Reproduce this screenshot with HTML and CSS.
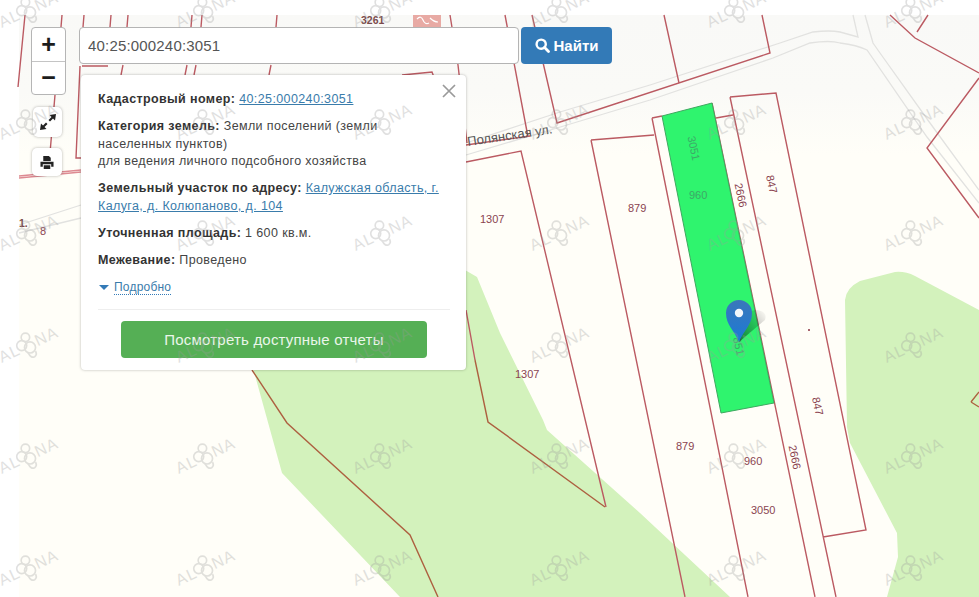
FILE: index.html
```html
<!DOCTYPE html>
<html lang="ru">
<head>
<meta charset="utf-8">
<title>Кадастровая карта</title>
<link rel="stylesheet" href="styles.css">
</head>
<body>
<main class="map">
  <svg class="map-art" width="979" height="597" viewBox="0 0 979 597" xmlns="http://www.w3.org/2000/svg">
    <defs>
      <linearGradient id="upper" x1="0" y1="0" x2="0" y2="1">
        <stop offset="0" stop-color="#f9f9f7"/>
        <stop offset="0.55" stop-color="#fafaf7"/>
        <stop offset="1" stop-color="#fffef8"/>
      </linearGradient>
      <linearGradient id="pinfill" x1="0" y1="0" x2="0" y2="1">
        <stop offset="0" stop-color="#3a78ba"/>
        <stop offset="1" stop-color="#1c79d6"/>
      </linearGradient>
      <linearGradient id="pinshadow" x1="0" y1="1" x2="1" y2="0">
        <stop offset="0" stop-color="#000" stop-opacity=".5"/>
        <stop offset="1" stop-color="#000" stop-opacity="0"/>
      </linearGradient>
    </defs>
    <rect class="paper" x="19" y="15" width="960" height="582"/>
    <rect x="19" y="15" width="960" height="140" fill="url(#upper)"/>
    <path class="wood" d="M248 350 L465 270 L477 277 L500 333 L543 420 L547 430 L640 513 L730 597 L400 597 L282 473 Z"/>
    <path class="wood" d="M845 300 Q846 288 860 281 L895 272 Q905 271 915 276 L979 310 L979 597 L887 597 L898 557 L897 533 L850 443 L847 427 Z"/>
    <path class="road" d="M466 155 L557 128 L650 100 L773 58 L810 43 Q830 40 840 43 Q857 45 867 50 L927 137 L979 203 M466 143 L560 112 L650 85 L780 43 L813 32 Q830 30 840 32 L858 37 L853 15 M865 15 L873 43 L880 53 L930 123 L979 190 M19 233 L81 218 M19 225 L81 205"/>
    <path class="parcel soft" d="M19 178 L81 172 M19 176 L81 170"/>
    <path class="parcel" d="M25 15 L18 87 M62 15 L61 27 M84 15 L83 27 M111 15 L110 27 M128 15 L127 27 M192 15 L191 27 M202 15 L201 27 M277 15 L276 27 M450 15 L458 65 L467 143 M505 15 L528 137 M532 15 L557 123 L770 53 L762 15 M664 15 L679 83 M82 66 L108 66 M123 65 L121 75 M187 65 L185 75 M196 65 L194 75 M271 65 L269 75 M402 75 L432 72 L435 80 M80 66 L76 158 L81 158 M55 95 L48 176 M466 145 L530 136 M466 162 L521 151 L606 507 M466 310 L475 360 M591 140 L654 135 M591 140 L685 597 M652 118 L662 116 M652 118 L748 597 M716 118 L733 115 M730 97 L776 93 L866 530 L823 537 M730 97 L836 597 M712 103 L815 597 M890 15 L915 38 L979 73 M928 15 L917 32 M979 78 L927 148 L979 218"/>
    <path class="parcel on-wood" d="M252 370 L287 423 L410 535 L438 597 M475 360 L488 422 L605 507 M971 402 L979 392 M971 402 L979 407"/>
    <polygon class="target" points="662,116 712,103 774,403 721,413"/>
    <rect class="stamp" x="413" y="15" width="28" height="12"/>
    <path class="stamp-line" d="M417 19 Q421 15 423 20 T429 23 M430 18 Q434 22 438 22"/>
    <circle class="dot" cx="809" cy="330" r="1"/>
    <text class="lot dark" x="361" y="24">3261</text>
    <text class="lot" x="480" y="223">1307</text>
    <text class="lot" x="628" y="212">879</text>
    <text class="lot on-green" x="689" y="199">960</text>
    <text class="lot" x="515" y="378">1307</text>
    <text class="lot" x="676" y="450">879</text>
    <text class="lot" x="744" y="465">960</text>
    <text class="lot" x="751" y="514">3050</text>
    <text class="lot on-green" x="690" y="149" transform="rotate(78 690 149)" text-anchor="middle">3051</text>
    <text class="lot" x="737" y="196" transform="rotate(78 737 196)" text-anchor="middle">2666</text>
    <text class="lot" x="768" y="185" transform="rotate(78 768 185)" text-anchor="middle">847</text>
    <text class="lot" x="791" y="458" transform="rotate(78 791 458)" text-anchor="middle">2666</text>
    <text class="lot" x="814" y="407" transform="rotate(78 814 407)" text-anchor="middle">847</text>
    <text class="lot on-green" x="735" y="347" transform="rotate(78 735 347)" text-anchor="middle">851</text>
    <text class="lot" x="40" y="235">8</text>
    <text class="lot dark" x="19" y="227">1.</text>
    <text class="street" x="468" y="146" transform="rotate(-8.5 468 146)">Полянская ул.</text>
    <path d="M739 342 L765 320 Q768 311 756 310 L744 312 Z" fill="url(#pinshadow)"/>
    <path d="M739 342 C734 330 726 325 726 313 A13 13 0 0 1 752 313 C752 325 744 330 739 342 Z" fill="url(#pinfill)"/>
    <circle cx="739" cy="313" r="4.2" fill="#f2f6fa"/>
  </svg>

  <div class="zoom-box">
    <button class="zoom-btn" type="button">+</button>
    <button class="zoom-btn" type="button">−</button>
  </div>
  <div class="tool tool-full">
    <svg width="18" height="18" viewBox="0 0 18 18" xmlns="http://www.w3.org/2000/svg"><path class="ink" d="M17 1 L10.5 2 L12.5 4 L9.5 7 L11 8.5 L14 5.5 L16 7.5 Z M1 17 L7.5 16 L5.5 14 L8.5 11 L7 9.5 L4 12.5 L2 10.5 Z"/></svg>
  </div>
  <div class="tool tool-print">
    <svg width="14" height="15" viewBox="0 0 15 15" xmlns="http://www.w3.org/2000/svg"><path class="ink" d="M3.5 0.5 H9.5 L11.5 2.5 V6 H3.5 Z M0.5 6.8 H14.5 V12 H12 V9.5 H3 V12 H0.5 Z M4 10.5 H11 V14.5 H4 Z"/></svg>
  </div>

  <form class="search">
    <input class="search-input" type="text" value="40:25:000240:3051">
    <button class="search-btn" type="button">
      <svg width="15" height="15" viewBox="0 0 15 15" xmlns="http://www.w3.org/2000/svg"><circle cx="6.2" cy="6.2" r="4.6" fill="none" stroke="#fff" stroke-width="2.4"/><path d="M9.6 9.6 L13.5 13.5" stroke="#fff" stroke-width="2.8" stroke-linecap="round"/></svg>
      Найти
    </button>
  </form>

  <section class="popup">
    <svg class="popup-close" width="14" height="14" viewBox="0 0 14 14" xmlns="http://www.w3.org/2000/svg"><path d="M1 1 L13 13 M13 1 L1 13" stroke="#9a9a9a" stroke-width="1.7"/></svg>
    <p class="row"><b>Кадастровый номер:</b> <a href="#">40:25:000240:3051</a></p>
    <p class="row"><b>Категория земель:</b> Земли поселений (земли населенных пунктов)<br>для ведения личного подсобного хозяйства</p>
    <p class="row"><b>Земельный участок по адресу:</b> <a href="#">Калужская область, г. Калуга, д. Колюпаново, д. 104</a></p>
    <p class="row"><b>Уточненная площадь:</b> 1 600 кв.м.</p>
    <p class="row"><b>Межевание:</b> Проведено</p>
    <div class="more"><i class="caret"></i><span class="more-link">Подробно</span></div>
    <hr class="rule">
    <button class="reports" type="button">Посмотреть доступные отчеты</button>
  </section>

  <svg class="defs-only" width="0" height="0" xmlns="http://www.w3.org/2000/svg">
    <symbol id="knot" viewBox="0 0 26 30">
      <g fill="none" stroke="currentColor" stroke-width="1.8">
        <circle cx="11" cy="6" r="4.6"/>
        <circle cx="7" cy="15" r="5.4"/>
        <circle cx="16" cy="17" r="6"/>
        <path d="M14 23 Q17 29 21 27 Q24 25 22 21"/>
      </g>
    </symbol>
  </svg>
  <div class="marks">
    <div class="mark">AL<svg class="knot"><use href="#knot"/></svg>NA</div><div class="mark">AL<svg class="knot"><use href="#knot"/></svg>NA</div><div class="mark">AL<svg class="knot"><use href="#knot"/></svg>NA</div><div class="mark">AL<svg class="knot"><use href="#knot"/></svg>NA</div><div class="mark">AL<svg class="knot"><use href="#knot"/></svg>NA</div><div class="mark">AL<svg class="knot"><use href="#knot"/></svg>NA</div>
    <div class="mark">AL<svg class="knot"><use href="#knot"/></svg>NA</div><div class="mark">AL<svg class="knot"><use href="#knot"/></svg>NA</div><div class="mark">AL<svg class="knot"><use href="#knot"/></svg>NA</div><div class="mark">AL<svg class="knot"><use href="#knot"/></svg>NA</div><div class="mark">AL<svg class="knot"><use href="#knot"/></svg>NA</div><div class="mark">AL<svg class="knot"><use href="#knot"/></svg>NA</div>
    <div class="mark">AL<svg class="knot"><use href="#knot"/></svg>NA</div><div class="mark">AL<svg class="knot"><use href="#knot"/></svg>NA</div><div class="mark">AL<svg class="knot"><use href="#knot"/></svg>NA</div><div class="mark">AL<svg class="knot"><use href="#knot"/></svg>NA</div><div class="mark">AL<svg class="knot"><use href="#knot"/></svg>NA</div><div class="mark">AL<svg class="knot"><use href="#knot"/></svg>NA</div>
    <div class="mark">AL<svg class="knot"><use href="#knot"/></svg>NA</div><div class="mark">AL<svg class="knot"><use href="#knot"/></svg>NA</div><div class="mark">AL<svg class="knot"><use href="#knot"/></svg>NA</div><div class="mark">AL<svg class="knot"><use href="#knot"/></svg>NA</div><div class="mark">AL<svg class="knot"><use href="#knot"/></svg>NA</div><div class="mark">AL<svg class="knot"><use href="#knot"/></svg>NA</div>
    <div class="mark">AL<svg class="knot"><use href="#knot"/></svg>NA</div><div class="mark">AL<svg class="knot"><use href="#knot"/></svg>NA</div><div class="mark">AL<svg class="knot"><use href="#knot"/></svg>NA</div><div class="mark">AL<svg class="knot"><use href="#knot"/></svg>NA</div><div class="mark">AL<svg class="knot"><use href="#knot"/></svg>NA</div><div class="mark">AL<svg class="knot"><use href="#knot"/></svg>NA</div>
    <div class="mark">AL<svg class="knot"><use href="#knot"/></svg>NA</div><div class="mark">AL<svg class="knot"><use href="#knot"/></svg>NA</div><div class="mark">AL<svg class="knot"><use href="#knot"/></svg>NA</div><div class="mark">AL<svg class="knot"><use href="#knot"/></svg>NA</div><div class="mark">AL<svg class="knot"><use href="#knot"/></svg>NA</div><div class="mark">AL<svg class="knot"><use href="#knot"/></svg>NA</div>
  </div>
</main>
</body>
</html>
```

FILE: styles.css
```css
* { box-sizing: border-box; }

html, body {
  margin: 0;
  height: 100%;
  background: #fff;
  overflow: hidden;
}

body {
  font-family: "Liberation Sans", Arial, sans-serif;
  color: #333;
}

.map {
  position: relative;
  width: 979px;
  height: 597px;
  overflow: hidden;
  background: #fff;
}

.map-art {
  position: absolute;
  left: 0;
  top: 0;
  display: block;
}

.paper { fill: #fffef8; }
.wood { fill: #d3f2bc; }
.road { fill: none; stroke: #e2e2e0; stroke-width: 1.3; }
.parcel { fill: none; stroke: #bb5a62; stroke-width: 1.4; }
.parcel.soft { stroke: #dd8a92; }
.parcel.on-wood { stroke: #ad6040; }
.target { fill: #2ff46e; stroke: #3fa860; stroke-width: 1; }
.stamp { fill: #e8aaa4; }
.stamp-line { fill: none; stroke: #fff; stroke-width: 1.2; }
.dot { fill: #8a3040; }
.lot { font-size: 11px; fill: #8a4450; font-family: "Liberation Sans", Arial, sans-serif; }
.lot.dark { fill: #7a4a4a; font-weight: 700; font-size: 10.5px; }
.lot.on-green { fill: #3ea868; }
.street { font-size: 13px; fill: #555; font-family: "Liberation Sans", Arial, sans-serif; }
.ink { fill: #222; }

.zoom-box {
  position: absolute;
  left: 31px;
  top: 27px;
  width: 35px;
  height: 68px;
  display: flex;
  flex-direction: column;
  background: #fff;
  border: 1px solid #b5b5b5;
  border-radius: 4px;
}

.zoom-btn {
  flex: 1;
  padding: 0;
  border: 0;
  background: none;
  font: 700 25px/1 "Liberation Sans", Arial, sans-serif;
  color: #1c1c1c;
}

.zoom-btn + .zoom-btn { border-top: 1px solid #c4c4c4; }

.tool {
  position: absolute;
  display: flex;
  align-items: center;
  justify-content: center;
  background: #fff;
  border-radius: 5px;
  box-shadow: 0 0 3px rgba(0, 0, 0, .3);
}

.tool-full { left: 33px; top: 107px; width: 29px; height: 30px; }
.tool-print { left: 32px; top: 148px; width: 30px; height: 28px; }

.search {
  position: absolute;
  left: 79px;
  top: 27px;
  display: flex;
  gap: 2px;
  margin: 0;
}

.search-input {
  width: 440px;
  height: 37px;
  padding: 0 8px;
  border: 1px solid #b4b4b4;
  border-radius: 4px;
  background: #fff;
  font: 15px "Liberation Sans", Arial, sans-serif;
  letter-spacing: .18px;
  color: #555;
}

.search-btn {
  display: flex;
  align-items: center;
  justify-content: center;
  gap: 4px;
  width: 91px;
  height: 37px;
  padding: 0;
  border: 0;
  border-radius: 4px;
  background: #337ab7;
  font: 700 15px "Liberation Sans", Arial, sans-serif;
  color: #fff;
}

.popup {
  position: absolute;
  left: 81px;
  top: 75px;
  width: 385px;
  height: 295px;
  padding: 16px 16px 0 17px;
  background: #fff;
  border-radius: 4px;
  box-shadow: 0 0 3px rgba(0, 0, 0, .28);
  font-size: 12.5px;
  line-height: 17.5px;
  letter-spacing: .38px;
}

.popup-close {
  position: absolute;
  right: 10px;
  top: 9px;
}

.row {
  margin: 0 0 9.5px;
  padding-right: 6px;
  color: #444;
}

.row b { color: #333; }
.row a { color: #3a7cab; text-decoration: underline; }

.more {
  display: flex;
  align-items: center;
  gap: 5px;
  padding: 1px 0 0 1px;
}

.caret {
  width: 0;
  height: 0;
  border-left: 5px solid transparent;
  border-right: 5px solid transparent;
  border-top: 5px solid #337ab7;
}

.more-link {
  color: #3a7cab;
  font-size: 12px;
  line-height: 14px;
  letter-spacing: .2px;
  border-bottom: 1px dotted #337ab7;
}

.rule {
  height: 1px;
  margin: 14px 0 11px;
  border: 0;
  background: #eee;
}

.reports {
  display: block;
  width: 306px;
  height: 37px;
  margin: 0 0 0 23px;
  padding: 0;
  border: 0;
  border-radius: 4px;
  background: #55af55;
  font: 15px "Liberation Sans", Arial, sans-serif;
  letter-spacing: .2px;
  color: #eaf6ea;
}

.defs-only { position: absolute; }

.marks {
  position: absolute;
  left: -60px;
  top: -46px;
  display: grid;
  grid-template-columns: repeat(6, 177px);
  grid-auto-rows: 111.5px;
  pointer-events: none;
}

.mark {
  display: flex;
  align-items: center;
  justify-content: center;
  font-size: 16px;
  letter-spacing: 1px;
  color: #9c9c9c;
  opacity: .3;
  transform: rotate(-25deg);
}

.knot {
  width: 24px;
  height: 28px;
  margin: 0 -3px;
  transform: rotate(25deg);
}
```
